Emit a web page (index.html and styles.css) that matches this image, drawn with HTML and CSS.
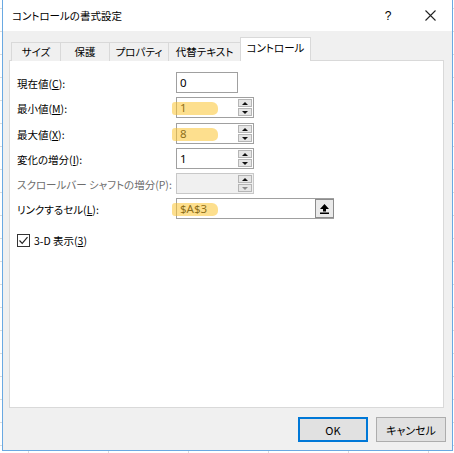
FILE: index.html
```html
<!DOCTYPE html>
<html lang="ja">
<head>
    <meta charset="UTF-8">
    <title>コントロールの書式設定</title>
    <link rel="stylesheet" href="styles.css">
</head>
<body>
    <div class="dialog">
        <div class="titlebar">
            <span class="title">コントロールの書式設定</span>
            <span class="help">?</span>
            <span class="close">
                <svg width="11" height="11" viewBox="0 0 11 11"><path d="M0.5 0.5 L10.5 10.5 M10.5 0.5 L0.5 10.5" stroke="#222" stroke-width="1.1"/></svg>
            </span>
        </div>

        <div class="tabs">
            <div class="tab t1">サイズ</div>
            <div class="tab t2">保護</div>
            <div class="tab t3">プロパティ</div>
            <div class="tab t4">代替テキスト</div>
            <div class="tab active">コントロール</div>
        </div>

        <div class="panel">
            <div class="row">
                <label>現在値(<u>C</u>):</label>
                <div class="field w-sm"><span class="value">0</span></div>
            </div>
            <div class="row">
                <label>最小値(<u>M</u>):</label>
                <div class="field w-md">
                    <span class="value">1</span>
                    <span class="spin"><i class="up"></i><i class="down"></i></span>
                    <span class="marker"></span>
                </div>
            </div>
            <div class="row tall">
                <label>最大値(<u>X</u>):</label>
                <div class="field w-md">
                    <span class="value">8</span>
                    <span class="spin"><i class="up"></i><i class="down"></i></span>
                    <span class="marker"></span>
                </div>
            </div>
            <div class="row">
                <label>変化の増分(<u>I</u>):</label>
                <div class="field w-md">
                    <span class="value">1</span>
                    <span class="spin"><i class="up"></i><i class="down"></i></span>
                </div>
            </div>
            <div class="row">
                <label class="disabled">スクロールバー シャフトの増分(P):</label>
                <div class="field w-md off">
                    <span class="value"></span>
                    <span class="spin"><i class="up"></i><i class="down"></i></span>
                </div>
            </div>
            <div class="row">
                <label>リンクするセル(<u>L</u>):</label>
                <div class="field w-lg">
                    <span class="value">$A$3</span>
                    <span class="pick">
                        <svg width="9" height="10" viewBox="0 0 9 10"><path d="M4.5 0 L9 5 L6 5 L6 7.5 L3 7.5 L3 5 L0 5 Z" fill="#000"/><rect x="0" y="8.5" width="9" height="1.5" fill="#000"/></svg>
                    </span>
                    <span class="marker"></span>
                </div>
            </div>
            <div class="check-row">
                <span class="checkbox">
                    <svg width="11" height="11" viewBox="0 0 11 11"><path d="M1.5 5.5 L4.2 8.3 L9.5 2.2" stroke="#222" stroke-width="1.2" fill="none"/></svg>
                </span>
                <span>3-D 表示(<u>3</u>)</span>
            </div>
        </div>

        <div class="buttons">
            <button class="btn default">OK</button>
            <button class="btn">キャンセル</button>
        </div>
    </div>
</body>
</html>
```

FILE: styles.css
```css
/* sheet behind the dialog */
body {
    margin: 0;
    padding: 0;
    background-color: #fff;
    background-image:
        linear-gradient(to bottom, #dcdcdc 1px, transparent 1px),
        linear-gradient(to right, #dcdcdc 1px, transparent 1px);
    background-size: 100% 23px, 80px 100%;
    background-position: 0 8px, 28px 0;
    font-family: "Noto Sans CJK JP", sans-serif;
    font-feature-settings: "palt";
    font-size: 10.5px;
    color: #000;
}

.dialog {
    margin-left: 2px;
    width: 449px;
    height: 450px;
    background-color: #f0f0f0;
    border: 1px solid #6aa9e2;
    border-top: none;
}

/* title bar */
.titlebar {
    height: 31px;
    background-color: #fff;
    display: flex;
    align-items: center;
    font-size: 10.5px;
}

.title {
    flex: 1;
    padding-left: 9px;
    padding-bottom: 1px;
}

.help {
    width: 20px;
    text-align: center;
    font-family: "Liberation Sans", sans-serif;
    font-size: 12px;
    margin-right: 17px;
}

.close {
    width: 30px;
    margin-right: 7px;
    display: flex;
    justify-content: center;
}

/* tabs */
.tabs {
    display: flex;
    align-items: flex-end;
    height: 30px;
    padding-left: 8px;
    margin-bottom: -1px;
    position: relative;
    z-index: 1;
}

.tab {
    box-sizing: border-box;
    height: 19px;
    border: 1px solid #d9d9d9;
    border-bottom: none;
    margin-left: -1px;
    background-color: #f0f0f0;
    text-align: center;
    line-height: 18px;
}

.t1 { width: 50px; margin-left: 0; }
.t2 { width: 50px; }
.t3 { width: 60px; }
.t4 { width: 73px; }

.tab.active {
    width: 71px;
    height: 24px;
    background-color: #fff;
    line-height: 20px;
}

/* panel */
.panel {
    box-sizing: border-box;
    margin-left: 6px;
    width: 435px;
    height: 348px;
    background-color: #fff;
    border: 1px solid #d9d9d9;
    padding: 10px 0 0 7px;
}

.row {
    display: flex;
    align-items: center;
    height: 25px;
}

.row.tall {
    margin-top: 1px;
}

.row label {
    width: 159px;
    flex: none;
}

.row label.disabled {
    color: #6d6d6d;
}

.field {
    position: relative;
    box-sizing: border-box;
    height: 21px;
    border: 1px solid #a0a0a0;
    background-color: #fff;
    display: flex;
    align-items: center;
    margin-top: -2px;
}

.w-sm { width: 62px; }
.w-md { width: 78px; }
.w-lg { width: 158px; }

.field.off {
    background-color: #f0f0f0;
    border-color: #c8c8c8;
}

.value {
    flex: 1;
    padding-left: 3px;
    font-family: "Noto Sans", sans-serif;
    font-size: 11.5px;
}

.spin {
    width: 14px;
    height: 17px;
    margin-right: 1px;
    display: flex;
    flex-direction: column;
    gap: 1px;
}

.spin i {
    flex: 1;
    box-sizing: border-box;
    border: 1px solid #b5b5b5;
    background-color: #e6e6e6;
    position: relative;
}

.spin i::after {
    content: "";
    position: absolute;
    left: 3px;
    top: 2px;
    border-left: 3px solid transparent;
    border-right: 3px solid transparent;
}

.spin .up::after {
    border-bottom: 3px solid #111;
}

.spin .down::after {
    border-top: 3px solid #111;
}

.off .spin .down::after {
    border-top-color: #8a8a8a;
}

.pick {
    box-sizing: border-box;
    width: 19px;
    height: 19px;
    border: 1px solid #8c8c8c;
    background-color: #eaeaea;
    display: flex;
    align-items: center;
    justify-content: center;
    margin-right: -1px;
}

/* highlighter strokes over the values */
.marker {
    position: absolute;
    left: -5px;
    top: 4px;
    width: 46px;
    height: 13px;
    background-color: rgba(251, 196, 50, 0.55);
    border-radius: 3px 6px 5px 3px;
}

.check-row {
    display: flex;
    align-items: center;
    gap: 4px;
    margin-top: 11px;
}

.checkbox {
    box-sizing: border-box;
    width: 13px;
    height: 13px;
    border: 1px solid #333;
    display: flex;
    align-items: center;
    justify-content: center;
}

/* bottom buttons */
.buttons {
    display: flex;
    justify-content: flex-end;
    gap: 8px;
    padding: 9px 6px 0 0;
}

.btn {
    box-sizing: border-box;
    width: 70px;
    height: 25px;
    border: 1px solid #adadad;
    background-color: #e1e1e1;
    font-family: "Noto Sans CJK JP", sans-serif;
    font-feature-settings: "palt";
    font-size: 11px;
    padding: 0;
}

.btn.default {
    border: 2px solid #0078d7;
}
```
